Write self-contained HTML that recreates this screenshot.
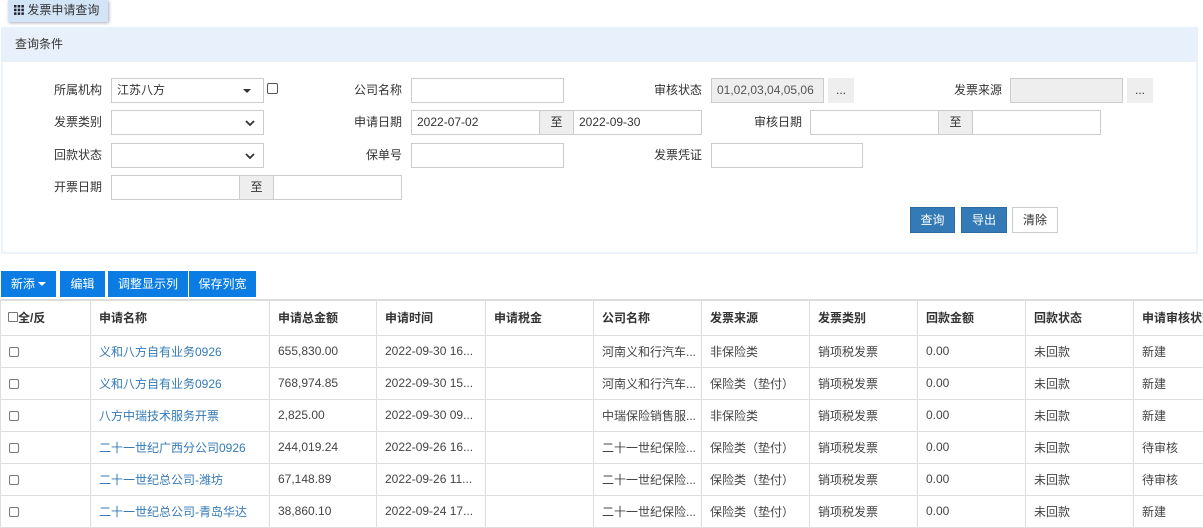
<!DOCTYPE html>
<html><head><meta charset="utf-8"><style>
*{box-sizing:border-box;margin:0;padding:0}
body{width:1203px;height:508px;overflow:hidden;background:#fff;font-family:"Liberation Sans","Noto Sans CJK SC",sans-serif;font-size:12px;color:#333;position:relative}
.a{position:absolute}
.lbl{position:absolute;text-align:right;width:80px;line-height:25px;height:25px}
.in{position:absolute;height:25px;border:1px solid #ccc;background:#fff;line-height:23px;padding-left:5px}
.g{background:#eee}
.zhi{position:absolute;height:25px;background:#eee;border:1px solid #ccc;text-align:center;line-height:23px}
.btn{position:absolute;height:26px;background:#0a7ce3;color:#fff;text-align:center;line-height:26px}
.qb{position:absolute;height:26px;background:#337ab7;border:1px solid #2e6da4;color:#fff;text-align:center;line-height:24px}
table{position:absolute;left:0;top:299px;width:1213px;border-collapse:collapse;table-layout:fixed;border-top:2px solid #ddd}
td,th{border:1px solid #ddd;height:32px;padding-left:8px;white-space:nowrap;overflow:hidden;text-align:left;font-size:12px;color:#444}
th{height:35px;font-weight:bold;color:#333}
td a{color:#337ab7;text-decoration:none}
.cb{display:inline-block;width:10px;height:10px;border:1px solid #777;border-radius:2px;vertical-align:middle}
</style></head><body>
<div class="a" style="left:8px;top:0;width:100px;height:22px;background:#d3e4f7;box-shadow:1px 1px 3px #aab;line-height:20px;padding-left:6px">
<svg width="10" height="10" style="vertical-align:-1px"><g fill="#223"><rect x="0" y="0" width="2.5" height="2.5"/><rect x="3.7" y="0" width="2.5" height="2.5"/><rect x="7.4" y="0" width="2.5" height="2.5"/><rect x="0" y="3.7" width="2.5" height="2.5"/><rect x="3.7" y="3.7" width="2.5" height="2.5"/><rect x="7.4" y="3.7" width="2.5" height="2.5"/><rect x="0" y="7.4" width="2.5" height="2.5"/><rect x="3.7" y="7.4" width="2.5" height="2.5"/><rect x="7.4" y="7.4" width="2.5" height="2.5"/></g></svg> 发票申请查询</div>
<div class="a" style="left:1px;top:27px;width:1197px;height:227px;border:2px solid #edf3fa;border-top:none"></div>
<div class="a" style="left:1px;top:27px;width:1197px;height:35px;background:#e8f1fb;line-height:35px;padding-left:14px">查询条件</div>

<div class="lbl" style="left:22px;top:78px">所属机构</div>
<div class="in" style="left:111px;top:78px;width:153px">江苏八方<span style="position:absolute;right:12px;top:10px;border:4px solid transparent;border-top:4px solid #333;border-bottom:none;width:0;height:0"></span></div>
<div class="a" style="left:267px;top:83px;width:11px;height:11px;border:1px solid #555;border-radius:2px"></div>
<div class="lbl" style="left:322px;top:78px">公司名称</div>
<div class="in" style="left:411px;top:78px;width:153px"></div>
<div class="lbl" style="left:622px;top:78px">审核状态</div>
<div class="in g" style="left:711px;top:78px;width:113px;color:#555">01,02,03,04,05,06</div>
<div class="zhi" style="left:828px;top:78px;width:26px;border:none;line-height:25px">...</div>
<div class="lbl" style="left:922px;top:78px">发票来源</div>
<div class="in g" style="left:1010px;top:78px;width:113px"></div>
<div class="zhi" style="left:1127px;top:78px;width:26px;border:none;line-height:25px">...</div>

<div class="lbl" style="left:22px;top:110px">发票类别</div>
<div class="in" style="left:111px;top:110px;width:153px"><svg class="a" style="right:8px;top:9px" width="10" height="7"><path d="M1 1L5 5L9 1" stroke="#333" stroke-width="1.8" fill="none"/></svg></div>
<div class="lbl" style="left:322px;top:110px">申请日期</div>
<div class="in" style="left:411px;top:110px;width:129px">2022-07-02</div>
<div class="zhi" style="left:539px;top:110px;width:35px">至</div>
<div class="in" style="left:573px;top:110px;width:129px">2022-09-30</div>
<div class="lbl" style="left:722px;top:110px">审核日期</div>
<div class="in" style="left:810px;top:110px;width:129px"></div>
<div class="zhi" style="left:938px;top:110px;width:35px">至</div>
<div class="in" style="left:972px;top:110px;width:129px"></div>

<div class="lbl" style="left:22px;top:143px">回款状态</div>
<div class="in" style="left:111px;top:143px;width:153px"><svg class="a" style="right:8px;top:9px" width="10" height="7"><path d="M1 1L5 5L9 1" stroke="#333" stroke-width="1.8" fill="none"/></svg></div>
<div class="lbl" style="left:322px;top:143px">保单号</div>
<div class="in" style="left:411px;top:143px;width:153px"></div>
<div class="lbl" style="left:622px;top:143px">发票凭证</div>
<div class="in" style="left:711px;top:143px;width:152px"></div>

<div class="lbl" style="left:22px;top:175px">开票日期</div>
<div class="in" style="left:111px;top:175px;width:129px"></div>
<div class="zhi" style="left:239px;top:175px;width:35px">至</div>
<div class="in" style="left:273px;top:175px;width:129px"></div>

<div class="qb" style="left:910px;top:207px;width:45px">查询</div>
<div class="qb" style="left:961px;top:207px;width:46px">导出</div>
<div class="qb" style="left:1012px;top:207px;width:46px;background:#fff;color:#333;border-color:#ccc">清除</div>

<div class="btn" style="left:1px;top:271px;width:55px">新添 <span style="display:inline-block;border:4px solid transparent;border-top:4px solid #fff;border-bottom:none;vertical-align:2px"></span></div>
<div class="btn" style="left:60px;top:271px;width:45px">编辑</div>
<div class="btn" style="left:108px;top:271px;width:80px">调整显示列</div>
<div class="btn" style="left:189px;top:271px;width:67px">保存列宽</div>

<table>
<colgroup><col style="width:90px"><col style="width:179px"><col style="width:107px"><col style="width:109px"><col style="width:108px"><col style="width:108px"><col style="width:108px"><col style="width:108px"><col style="width:108px"><col style="width:108px"><col style="width:80px"></colgroup>
<tr><th style="padding-left:7px"><span class="cb" style="border-radius:1px;vertical-align:0"></span>全/反</th><th>申请名称</th><th>申请总金额</th><th>申请时间</th><th>申请税金</th><th>公司名称</th><th>发票来源</th><th>发票类别</th><th>回款金额</th><th>回款状态</th><th>申请审核状态</th></tr>
<tr><td><span class="cb"></span></td><td><a>义和八方自有业务0926</a></td><td>655,830.00</td><td>2022-09-30 16...</td><td></td><td>河南义和行汽车...</td><td>非保险类</td><td>销项税发票</td><td>0.00</td><td>未回款</td><td>新建</td></tr>
<tr><td><span class="cb"></span></td><td><a>义和八方自有业务0926</a></td><td>768,974.85</td><td>2022-09-30 15...</td><td></td><td>河南义和行汽车...</td><td>保险类（垫付）</td><td>销项税发票</td><td>0.00</td><td>未回款</td><td>新建</td></tr>
<tr><td><span class="cb"></span></td><td><a>八方中瑞技术服务开票</a></td><td>2,825.00</td><td>2022-09-30 09...</td><td></td><td>中瑞保险销售服...</td><td>非保险类</td><td>销项税发票</td><td>0.00</td><td>未回款</td><td>新建</td></tr>
<tr><td><span class="cb"></span></td><td><a>二十一世纪广西分公司0926</a></td><td>244,019.24</td><td>2022-09-26 16...</td><td></td><td>二十一世纪保险...</td><td>保险类（垫付）</td><td>销项税发票</td><td>0.00</td><td>未回款</td><td>待审核</td></tr>
<tr><td><span class="cb"></span></td><td><a>二十一世纪总公司-潍坊</a></td><td>67,148.89</td><td>2022-09-26 11...</td><td></td><td>二十一世纪保险...</td><td>保险类（垫付）</td><td>销项税发票</td><td>0.00</td><td>未回款</td><td>待审核</td></tr>
<tr><td><span class="cb"></span></td><td><a>二十一世纪总公司-青岛华达</a></td><td>38,860.10</td><td>2022-09-24 17...</td><td></td><td>二十一世纪保险...</td><td>保险类（垫付）</td><td>销项税发票</td><td>0.00</td><td>未回款</td><td>新建</td></tr>
</table>
</body></html>
